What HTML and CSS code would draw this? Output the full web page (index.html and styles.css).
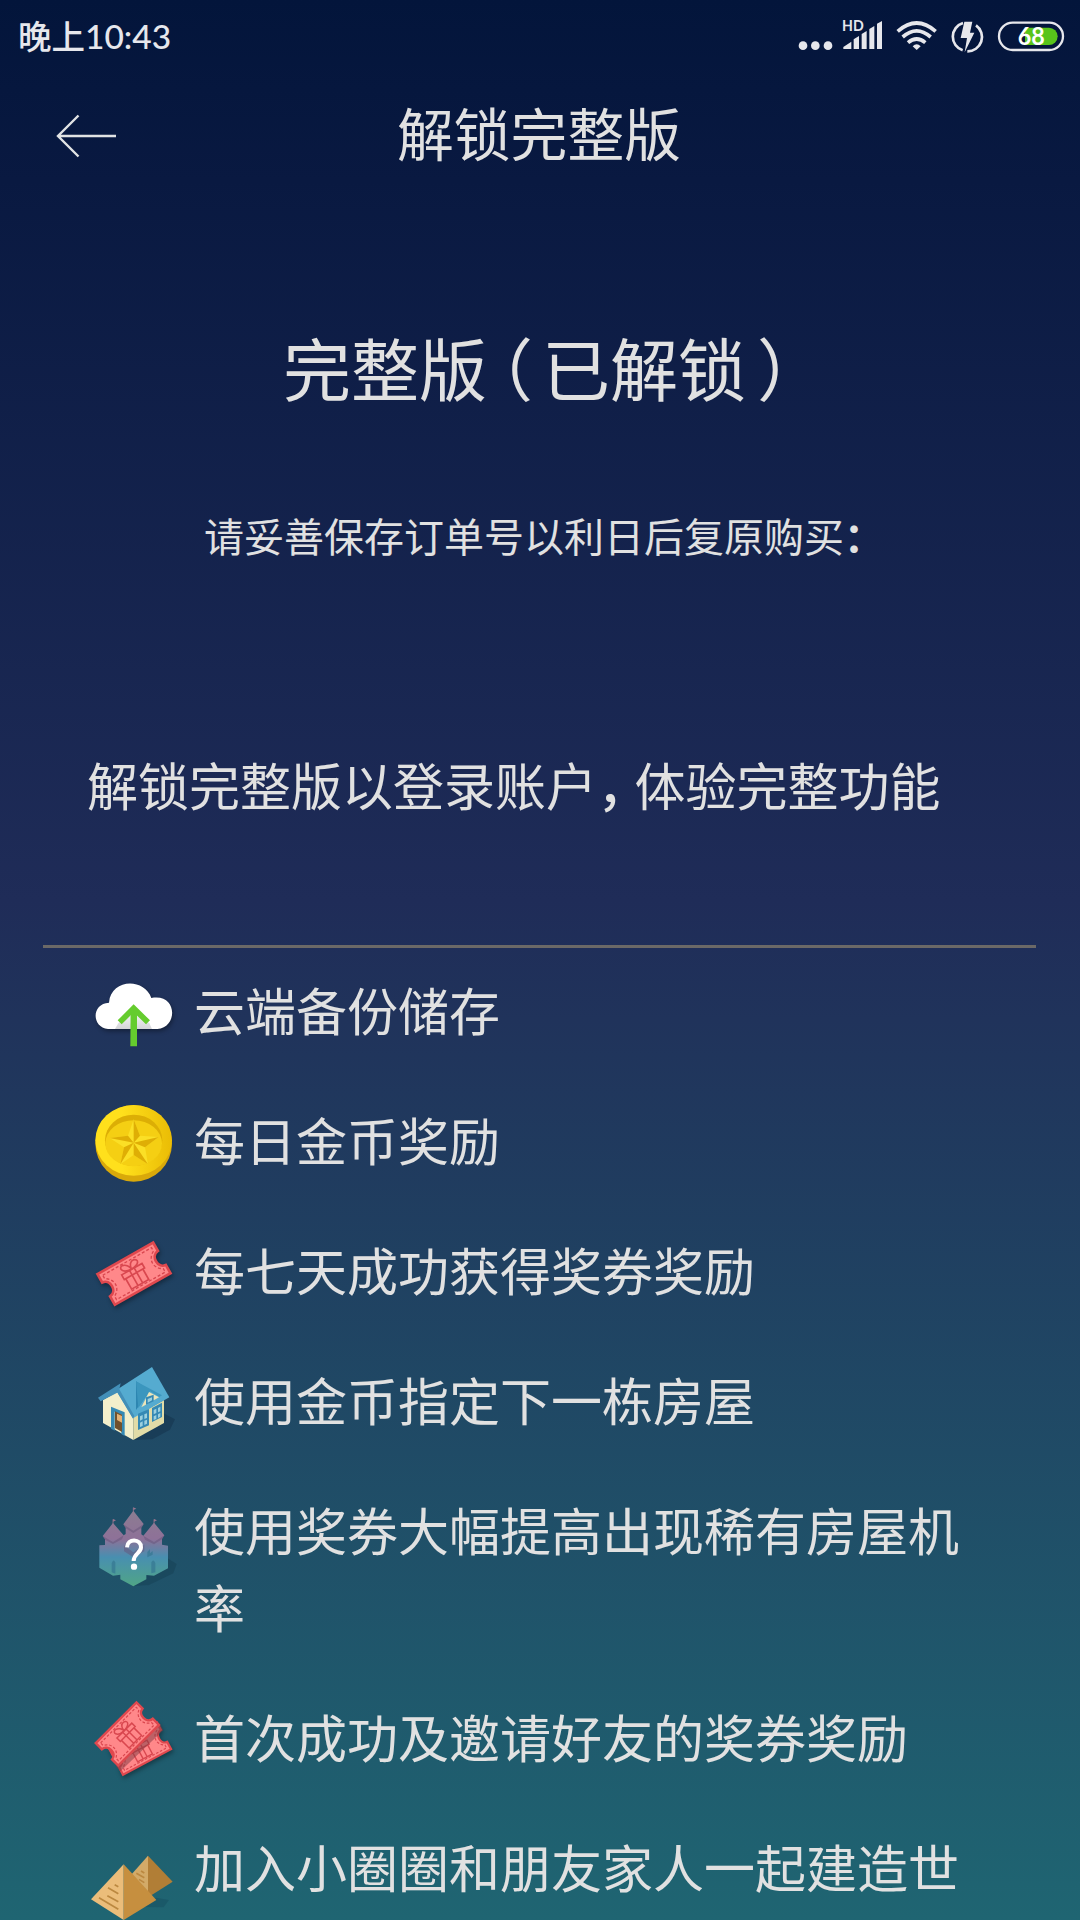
FILE: index.html
```
<!DOCTYPE html>
<html lang="zh-CN">
<head>
<meta charset="utf-8">
<title>解锁完整版</title>
<link rel="stylesheet" href="styles.css">
</head>
<body>
<div class="screen">
  <div class="statusbar">
    <span class="clock">晚上10:43</span>
    <svg class="status-icons" viewBox="0 0 900 240" fill="#e6e7ec">
      <circle cx="69" cy="137" r="13"/><circle cx="106" cy="137" r="13"/><circle cx="144" cy="137" r="13"/>
      <text class="hd" x="186" y="93" textLength="65" lengthAdjust="spacingAndGlyphs">HD</text>
      <path d="M190 147V141L214 125V147ZM221 147V118L237 108V147ZM245 147V102L260 93V147ZM268 147V87L283 78V147ZM291 147V71L306 63V147Z"/>
      <g fill="none" stroke="#e6e7ec" stroke-width="11">
        <path d="M353 94Q410 44 467 94M368 111Q410 74 452 111M384 128Q410 106 436 128"/>
        <path d="M548 151A43 43 0 0 1 549 69M588 76A43 43 0 0 1 562 154" stroke-width="8"/>
        <rect x="657" y="68" width="192" height="82" rx="41" stroke-width="7"/>
      </g>
      <path d="M410 150L398 139Q410 126 422 139Z"/>
      <path d="M553 65H577L570 98H583L554 157L561 114H542Z"/>
      <path d="M735 83H807A26 26 0 0 1 807 135H735Z" fill="#58c41b"/>
      <text class="battery" x="713" y="135" textLength="81" lengthAdjust="spacingAndGlyphs">68</text>
    </svg>
  </div>

  <header class="topbar">
    <svg class="back" viewBox="0 0 60 44" fill="none" stroke="#e1e3e4" stroke-width="2.4"><path d="M22.500 1.500L2 22L22.500 42.500M2 22H60"/></svg>
    <h1 class="page-title">解锁完整版</h1>
  </header>

  <h2 class="product">完整版<span class="paren-open">（</span>已解锁<span class="paren-close">）</span></h2>
  <p class="order-note">请妥善保存订单号以利日后复原购买<b>：</b></p>
  <p class="summary">解锁完整版以登录账户<span class="comma">，</span>体验完整功能</p>

  <ul class="features">
    <li class="feature">
      <svg class="icon" viewBox="42 42 240 240">
        <defs><linearGradient id="haze" x2="0" y2="1"><stop stop-color="#fff"/><stop offset="1" stop-color="#d4d5d8"/></linearGradient></defs>
        <path class="shadow" fill="#fff" d="M84 207C34 203 34 130 87 128C93 55 193 53 214 114C294 99 294 204 232 207Z"/>
        <path fill="url(#haze)" d="M161 145L208 190L216 207H105L115 190Z"/>
        <path fill="none" stroke="#65cc2e" stroke-width="17" d="M119 187L161 145L204 187"/><path fill="#65cc2e" d="M152 145H171V259H151Z"/>
      </svg>
      <span class="label">云端备份储存</span>
    </li>
    <li class="feature">
      <svg class="icon" viewBox="42 432 240 240">
        <defs><linearGradient id="gold"><stop offset=".35" stop-color="#ffe01c"/><stop offset="1" stop-color="#eabc05"/></linearGradient></defs>
        <circle cx="161" cy="550" r="115" fill="#d9a90a"/>
        <ellipse cx="161" cy="541" rx="115" ry="106" fill="url(#gold)"/>
        <ellipse cx="161" cy="541" rx="86" ry="77" fill="#dcae05"/>
        <ellipse cx="161" cy="550" rx="85" ry="69" fill="#f5cf13"/>
        <path fill="#fbdf26" d="M161 478L180 527L236 531L195 562L204 613L161 585L121 613L132 562L89 534L144 527Z"/>
        <path fill="#dfae05" d="M161 478L180 527L161 548ZM236 531L195 562L161 548ZM204 613L161 585V548ZM121 613L132 562L161 548ZM89 534L144 527L161 548Z"/>
      </svg>
      <span class="label">每日金币奖励</span>
    </li>
    <li class="feature">
      <svg class="icon" viewBox="42 42 240 240">
        <defs>
          <g id="gift" fill="none" stroke="#d9474f" stroke-width="5">
            <path d="M-34-15H36V1H-34ZM-29 1V37H30V1M-7-15V37M9-15V37"/>
            <path d="M0-15C-34-17-32-40-18-38C-7-36 0-24 0-15C0-27 8-39 19-37C34-32 30-17 0-15"/>
          </g>
          <g id="ticket">
            <path fill="#ff888a" stroke="#df484e" stroke-width="8" d="M-96-53H96V-24C69-22 69 22 96 24V53H-96V24C-69 22-69-22-96-24Z"/>
            <path fill="none" stroke="#d9474f" stroke-width="4" stroke-dasharray="9 6" d="M-84-42H84V-30C57-16 57 16 84 30V42H-84V30C-57 16-57-16-84-30Z"/>
            <use href="#gift"/>
          </g>
        </defs>
        <g class="shadow"><use href="#ticket" transform="translate(162 161) rotate(-29.500)"/></g>
      </svg>
      <span class="label">每七天成功获得奖券奖励</span>
    </li>
    <li class="feature">
      <svg class="icon" viewBox="42 432 240 240">
        <path fill="#122f48" opacity=".45" d="M160 660L251 580L285 598L270 629L217 658Z"/>
        <path fill="#f3efcb" d="M69 540L116 513L160 590V660L69 609Z"/>
        <path fill="#e2dca7" d="M160 590L252 540V609L160 660Z"/>
        <path fill="#55abd0" d="M108 511L216 441L268 532L159 595Z"/>
        <path fill="#438fb8" d="M54 533L122 490L116 516L62 544ZM108 511L118 508L163 588L159 596Z"/>
        <path fill="#2d86b1" d="M168 484L210 512L168 570Z"/><path fill="#3b96be" d="M168 484L246 526L238 531L209 513L175 564Z"/>
        <path fill="#ece5b9" d="M207 516L237 532L184 562Z"/>
        <path fill="#3589b4" d="M93 560L134 577V648L124 642V584L104 575V632L93 626ZM174 581L207 567V616L174 630ZM216 564L246 548V591L216 606ZM198 532L221 524V544L198 554Z"/>
        <path fill="#70512e" d="M105 574L126 584V636L105 624Z"/><path fill="#e4b174" d="M111 581L126 588V608L111 600Z"/>
        <path fill="#9bd0df" d="M180 589L188 585V598L180 602ZM193 583L201 580V594L193 597ZM180 608L188 604V618L180 621ZM193 602L201 599V611L193 615ZM221 570L229 566V579L221 583ZM234 564L241 560V574L234 577ZM221 589L229 585V597L221 600ZM234 583L241 579V590L234 594ZM203 537L216 532V541L203 548Z"/>
      </svg>
      <span class="label">使用金币指定下一栋房屋</span>
    </li>
    <li class="feature">
      <svg class="icon" viewBox="42 12 240 240">
        <defs><linearGradient id="dusk" gradientUnits="userSpaceOnUse" x1="0" y1="60" x2="0" y2="288"><stop stop-color="#8c7d91"/><stop offset=".38" stop-color="#8e7198"/><stop offset=".62" stop-color="#488fb0"/><stop offset="1" stop-color="#50a586"/></linearGradient></defs>
        <path fill="#153d53" opacity=".45" d="M160 288L263 205L290 222L280 250L207 285Z"/>
        <path fill="url(#dusk)" d="M58 166L75 165V148L68 138L99 99L131 136L137 132V114L130 103L160 62L191 102L184 113V133L190 137L222 98L253 136L246 147V164L264 167V235L222 257L199 255V268L160 289L121 268V254L99 257L58 233Z"/>
        <g fill="#635177" opacity=".45"><path d="M68 138L99 156L131 136L126 148L99 162L75 149ZM130 103L160 122L191 102L184 114L160 129L137 115ZM190 137L222 156L253 136L246 148L222 163L195 149Z"/><path d="M132 166L160 187L193 164V184L160 202L132 184Z"/></g>
        <path fill="#357691" opacity=".7" d="M95 247V220Q100 205 106 217V251ZM214 250V217Q221 205 226 219V247ZM202 186L210 177V190L218 183V194L202 202Z"/>
        <path fill="none" stroke="#98758f" stroke-width="2.500" d="M99 102V88M160 65V53M222 102V88"/><path fill="#98758f" d="M99 87L108 91L99 95ZM160 52L169 56L160 60ZM222 87L231 91L222 95Z"/>
        <path fill="none" stroke="#fff" stroke-width="12" d="M141 172C142 143 184 146 183 172C182 191 161 190 161 213"/><circle cx="162" cy="230" r="9.500" fill="#fff"/>
      </svg>
      <span class="label">使用奖券大幅提高出现稀有房屋机率</span>
    </li>
    <li class="feature">
      <svg class="icon" viewBox="42 63 240 240">
        <g class="shadow"><use href="#ticket" transform="translate(180 206) rotate(-28) scale(.85)"/></g>
        <path fill="#7c3942" opacity=".5" d="M107 259L237 127L250 151L121 274Z"/>
        <use href="#ticket" transform="translate(142 162) rotate(-45) scale(.9)"/>
      </svg>
      <span class="label">首次成功及邀请好友的奖券奖励</span>
    </li>
    <li class="feature">
      <svg class="icon" viewBox="42 453 240 240">
        <path fill="#15495d" opacity=".4" d="M131 718L228 653L267 660L251 682L190 681Z"/>
        <path fill="#d3aa68" d="M204 527L145 594L204 650Z"/><path fill="#b17e36" d="M204 527L278 605L214 646L204 650Z"/>
        <path fill="#ebbd7a" d="M131 553L33 658L131 720Z"/><path fill="#c68f3f" d="M131 553L229 660L131 720Z"/>
        <path stroke="#bb8840" stroke-width="5" d="M104 614L115 620M84 623L115 641M82 647L115 665M57 653L115 688M183 573L193 579M169 580L193 593M177 598L193 608"/>
      </svg>
      <span class="label">加入小圈圈和朋友家人一起建造世</span>
    </li>
  </ul>
</div>
</body>
</html>
```
FILE: styles.css
```
* { box-sizing: border-box; }
body {
  margin: 0;
  overflow: hidden;
  font-family: "Noto Sans CJK SC", sans-serif;
  color: #e1e1e1;
}
.screen {
  width: 1080px;
  height: 1920px;
  overflow: hidden;
  background: linear-gradient(#03153b 0, #091941 180px, #1f2c58 900px, #20335b 1020px, #1f6572 1920px);
}
h1, h2, p, ul { margin: 0; padding: 0; font-weight: 400; }
.statusbar {
  height: 80px;
  display: flex;
  justify-content: space-between;
}
.clock {
  padding-left: 18px;
  font: 500 33.500px/73px Lato, "Noto Sans CJK SC", sans-serif;
  color: #e6e7ec;
}
.status-icons { width: 300px; height: 80px; }
.hd { font: 700 43px Lato, sans-serif; }
.battery { font: 700 77px Lato, sans-serif; fill: #fff; }
.topbar {
  height: 110px;
  display: grid;
  grid-template-columns: 115px 1fr 117px;
}
.back { width: 60px; height: 44px; margin: 34px 0 0 56px; }
.page-title {
  text-align: center;
  font-size: 56.800px;
  line-height: 102px;
}
.product {
  padding: 122px 0 0 283px;
  font-size: 68px;
  line-height: 110px;
  white-space: nowrap;
}
.paren-open, .paren-close, .comma { font-feature-settings: "halt"; }
.paren-open { margin: 0 9px 0 12px; }
.paren-close { margin-left: 11px; }
.order-note {
  padding: 83px 0 0 204px;
  font-size: 40px;
  line-height: 60px;
}
.summary {
  padding: 181px 0 122px 87px;
  font-size: 51px;
  line-height: 77px;
  white-space: nowrap;
}
.comma { margin-right: 12px; font-weight: 500; }
.features {
  margin: 0 44px 0 43px;
  padding-top: 26px;
  border-top: 3px solid #6b6967;
  list-style: none;
}
.feature {
  display: flex;
  align-items: flex-start;
  gap: 20px;
  margin-bottom: 53px;
  padding-left: 51px;
}
.icon { flex: none; width: 80px; height: 80px; margin-bottom: -3px; overflow: visible; }
.shadow { filter: drop-shadow(4px 7px 6px rgb(0 0 0 / .35)); }
.label { width: 768px; margin: -3px 0 3px; font-size: 51px; line-height: 77px; }
```
